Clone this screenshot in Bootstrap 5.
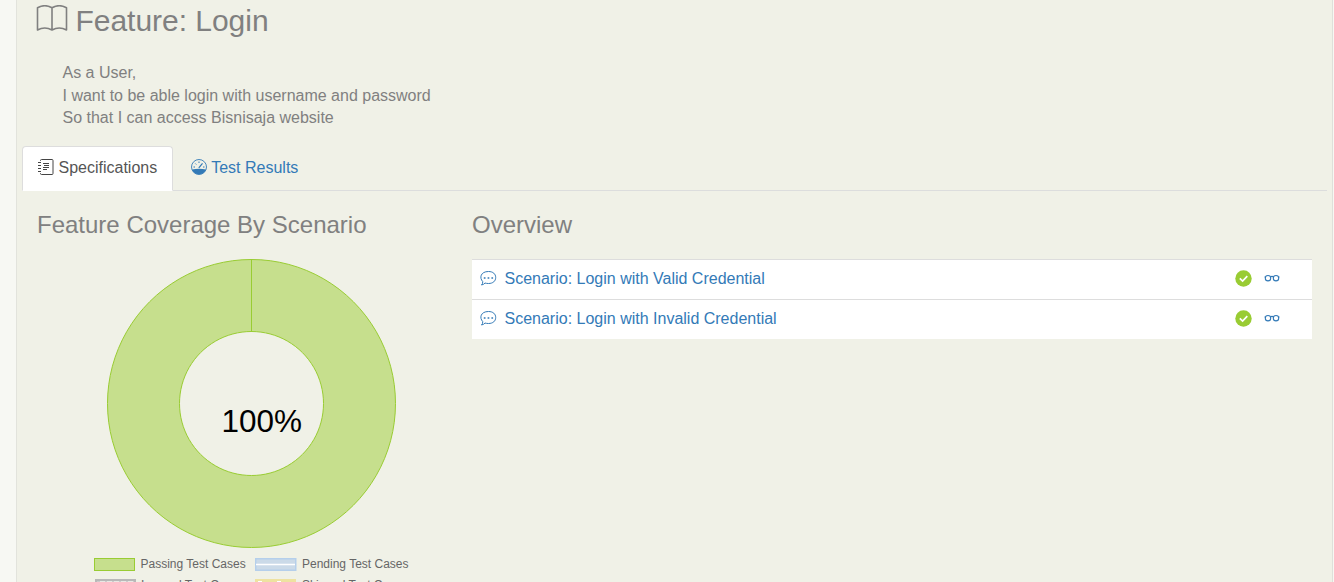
<!DOCTYPE html>
<html lang="en">
<head>
<meta charset="utf-8">
<meta name="viewport" content="width=device-width, initial-scale=1">
<title>Feature: Login</title>
<link href="https://cdn.jsdelivr.net/npm/bootstrap@5.3.0/dist/css/bootstrap.min.css" rel="stylesheet">
<style>
body{font-family:"Liberation Sans",Arial,sans-serif;font-size:16px;color:#808080;background:#f7f8f3;height:582px;overflow:hidden}
.report{margin-left:16px;width:1317px;height:582px;background:#f0f1e7;border-left:1px solid #e2e3dc;border-right:1px solid #dfe0da;overflow:hidden}
.feature-title{font-size:30px;line-height:42px;height:42px;padding-left:19px;font-weight:400}
.feature-title svg{margin:-6px 7.5px 0 0}
.feature-title span{letter-spacing:-.03px}
.narrative{line-height:22.6px;padding:20px 0 0 45.5px;height:104px}
.nav-tabs{margin:0 5px;--bs-nav-tabs-border-color:#dcdddd;--bs-nav-tabs-border-radius:4px;height:45px}
.nav-tabs .nav-link{height:45px;padding:9px 15px 0;line-height:23px;color:#337ab7}
.nav-tabs .nav-link.active{color:#555;background:#fff;border-color:#ddd #ddd #fff;padding-right:14.5px}
.nav-tabs .nav-item+.nav-item{margin-left:2px}
.tab-icon{margin:3px 4.5px 0 0}
.section-title{font-size:24px;line-height:28px;margin:0;font-weight:400}
.coverage{width:455px;padding:20px 0 0 20px}
.overview{width:840px;padding-top:20px}
.scenario{height:40px;background:#fff;border-top:1px solid #ddd;padding:0 32px 2px 8px;color:#337ab7}
.scenario a{color:#337ab7}
.scenario svg{position:relative;top:-.5px}
.legend-grid{font-size:12px;line-height:12px;color:#666;margin-left:57px;display:grid;grid-template-columns:161px 170px;row-gap:8px}
</style>
</head>
<body>
<main class="report">
  <h1 class="feature-title d-flex align-items-center mb-0">
    <svg width="32" height="26" viewBox="0 0 32 26" fill="none" stroke="#808080" stroke-width="1.6" stroke-linejoin="round"><path d="M1.500 2.800C6 .2 11.500 .2 16 2.800C20.500 .2 26 .2 30.500 2.800V25C26 22.500 20.500 22.500 16 25C11.500 22.500 6 22.500 1.500 25ZM16 2.800V25"/></svg>
    <span>Feature: Login</span>
  </h1>
  <div class="narrative">As a User,<br>I want to be able login with username and password<br>So that I can access Bisnisaja website</div>
  <ul class="nav nav-tabs">
    <li class="nav-item"><a class="nav-link active d-flex" href="#">
      <svg class="tab-icon" width="16" height="17" viewBox="0 0 16 17" fill="none" stroke="#444"><path d="M2.500 2V1.500A1 1 0 0 1 3.500 .5H14A1 1 0 0 1 15 1.500V14.500A1 1 0 0 1 14 15.500H3.500A1 1 0 0 1 2.500 14.500V14"/><path d="M0 3.500H3M0 6.500H3M0 9.500H3M0 12.500H3M5 4.500H11M6 6.500H11M5 8.500H11M5 10.500H9"/></svg>
      <span>Specifications</span></a></li>
    <li class="nav-item"><a class="nav-link d-flex" href="#">
      <svg class="tab-icon" width="16" height="17" viewBox="0 0 16 17" fill="none" stroke="#337ab7"><circle cx="8" cy="8" r="7.500" stroke-width=".9"/><path d="M1 10.500Q8 8.800 15 10.500A7.500 7.500 0 0 1 1 10.500Z" fill="#337ab7" stroke="none"/><path d="M7.800 8.800L11.500 4.300" stroke-width="1.200"/><path d="M8 2.500V4M4.300 4.500L5.300 5.500M2.500 8H4M12 8H13.500"/></svg>
      <span>Test Results</span></a></li>
  </ul>
  <div class="d-flex">
    <section class="coverage flex-shrink-0">
      <h2 class="section-title">Feature Coverage By Scenario</h2>
      <svg class="d-block" width="400" height="318.500" viewBox="0 0 400 318.500">
        <path d="M214.500 20.500a144 144 0 1 1-.01 0ZM214.500 92.500a72 72 0 1 0 .01 0Z" fill="#c6df8d" fill-rule="evenodd" stroke="#99cc33"/>
        <path d="M214.500 20V93" stroke="#99cc33"/>
        <text x="184.500" y="192.500" font-size="32" textLength="80.500" lengthAdjust="spacingAndGlyphs" fill="#000">100%</text>
      </svg>
      <div class="legend-grid">
        <div class="d-flex"><svg width="41" height="13" style="margin-right:5.5px"><rect x=".5" y=".5" width="40" height="12" fill="#c6df8d" stroke="#99cc33"/></svg>Passing Test Cases</div>
        <div class="d-flex"><svg width="41.500" height="13" style="margin-right:5.5px"><rect x=".75" y=".75" width="40" height="11.500" fill="#cbdae8" stroke="#b5cfeb" stroke-width="1.500"/><path d="M1 6.500H40" stroke="#fff" stroke-width="1.500"/></svg>Pending Test Cases</div>
        <div class="d-flex"><svg width="42" height="13" style="margin-right:5px"><rect x="2" y="1" width="39" height="11" fill="#ccc" stroke="#b8b8b8" stroke-width="2"/><path d="M6 2.500H41" stroke="#e8e8e4" stroke-dasharray="5 2"/></svg>Ignored Test Cases</div>
        <div class="d-flex"><svg width="41" height="13" style="margin-right:6px"><rect x="1" y="1" width="39" height="11" fill="#eee2a0" stroke="#eee2a0" stroke-width="2"/><path d="M3 2.500H7M22 2.500H26" stroke="#fff"/></svg>Skipped Test Cases</div>
      </div>
    </section>
    <section class="overview flex-shrink-0">
      <h2 class="section-title mb-3 pb-1">Overview</h2>
      <div class="scenario d-flex align-items-center">
        <svg width="17" height="16" viewBox="0 0 17 16" fill="none" stroke="#337ab7" style="margin-right:7.5px"><path d="M2.700 11.500C-.8 8 .5 1.500 8.500 1.500C13 1.500 15.700 4 15.700 7.500C15.700 11 13 13.500 8.500 13.500Q6.500 13.500 5 13Q4 14.500 1.500 15Q3 13.500 2.700 11.500Z"/><path d="M3.800 8H5.500M7.600 8H9.300M11.400 8H13.100" stroke-width="1.700"/></svg>
        <a class="text-decoration-none flex-grow-1" href="#">Scenario: Login with Valid Credential</a>
        <svg width="17" height="17" viewBox="0 0 17 17" style="margin-right:12px"><circle cx="8.500" cy="8.500" r="8.200" fill="#99cc33"/><path d="M4.800 8.300L7.600 11L12.300 6.200" fill="none" stroke="#fff" stroke-width="1.700"/></svg>
        <svg width="16" height="8" viewBox="0 0 16 8" fill="none" stroke="#337ab7" stroke-width="1.100"><circle cx="4" cy="4.200" r="2.700"/><circle cx="12" cy="4.200" r="2.700"/><path d="M.5 3H1.500M6.300 3Q8 1.800 9.700 3M14.500 3H15.500"/></svg>
      </div>
      <div class="scenario d-flex align-items-center">
        <svg width="17" height="16" viewBox="0 0 17 16" fill="none" stroke="#337ab7" style="margin-right:7.5px"><path d="M2.700 11.500C-.8 8 .5 1.500 8.500 1.500C13 1.500 15.700 4 15.700 7.500C15.700 11 13 13.500 8.500 13.500Q6.500 13.500 5 13Q4 14.500 1.500 15Q3 13.500 2.700 11.500Z"/><path d="M3.800 8H5.500M7.600 8H9.300M11.400 8H13.100" stroke-width="1.700"/></svg>
        <a class="text-decoration-none flex-grow-1" href="#">Scenario: Login with Invalid Credential</a>
        <svg width="17" height="17" viewBox="0 0 17 17" style="margin-right:12px"><circle cx="8.500" cy="8.500" r="8.200" fill="#99cc33"/><path d="M4.800 8.300L7.600 11L12.300 6.200" fill="none" stroke="#fff" stroke-width="1.700"/></svg>
        <svg width="16" height="8" viewBox="0 0 16 8" fill="none" stroke="#337ab7" stroke-width="1.100"><circle cx="4" cy="4.200" r="2.700"/><circle cx="12" cy="4.200" r="2.700"/><path d="M.5 3H1.500M6.300 3Q8 1.800 9.700 3M14.500 3H15.500"/></svg>
      </div>
    </section>
  </div>
</main>
<script src="https://cdn.jsdelivr.net/npm/bootstrap@5.3.0/dist/js/bootstrap.bundle.min.js"></script>
</body>
</html>
